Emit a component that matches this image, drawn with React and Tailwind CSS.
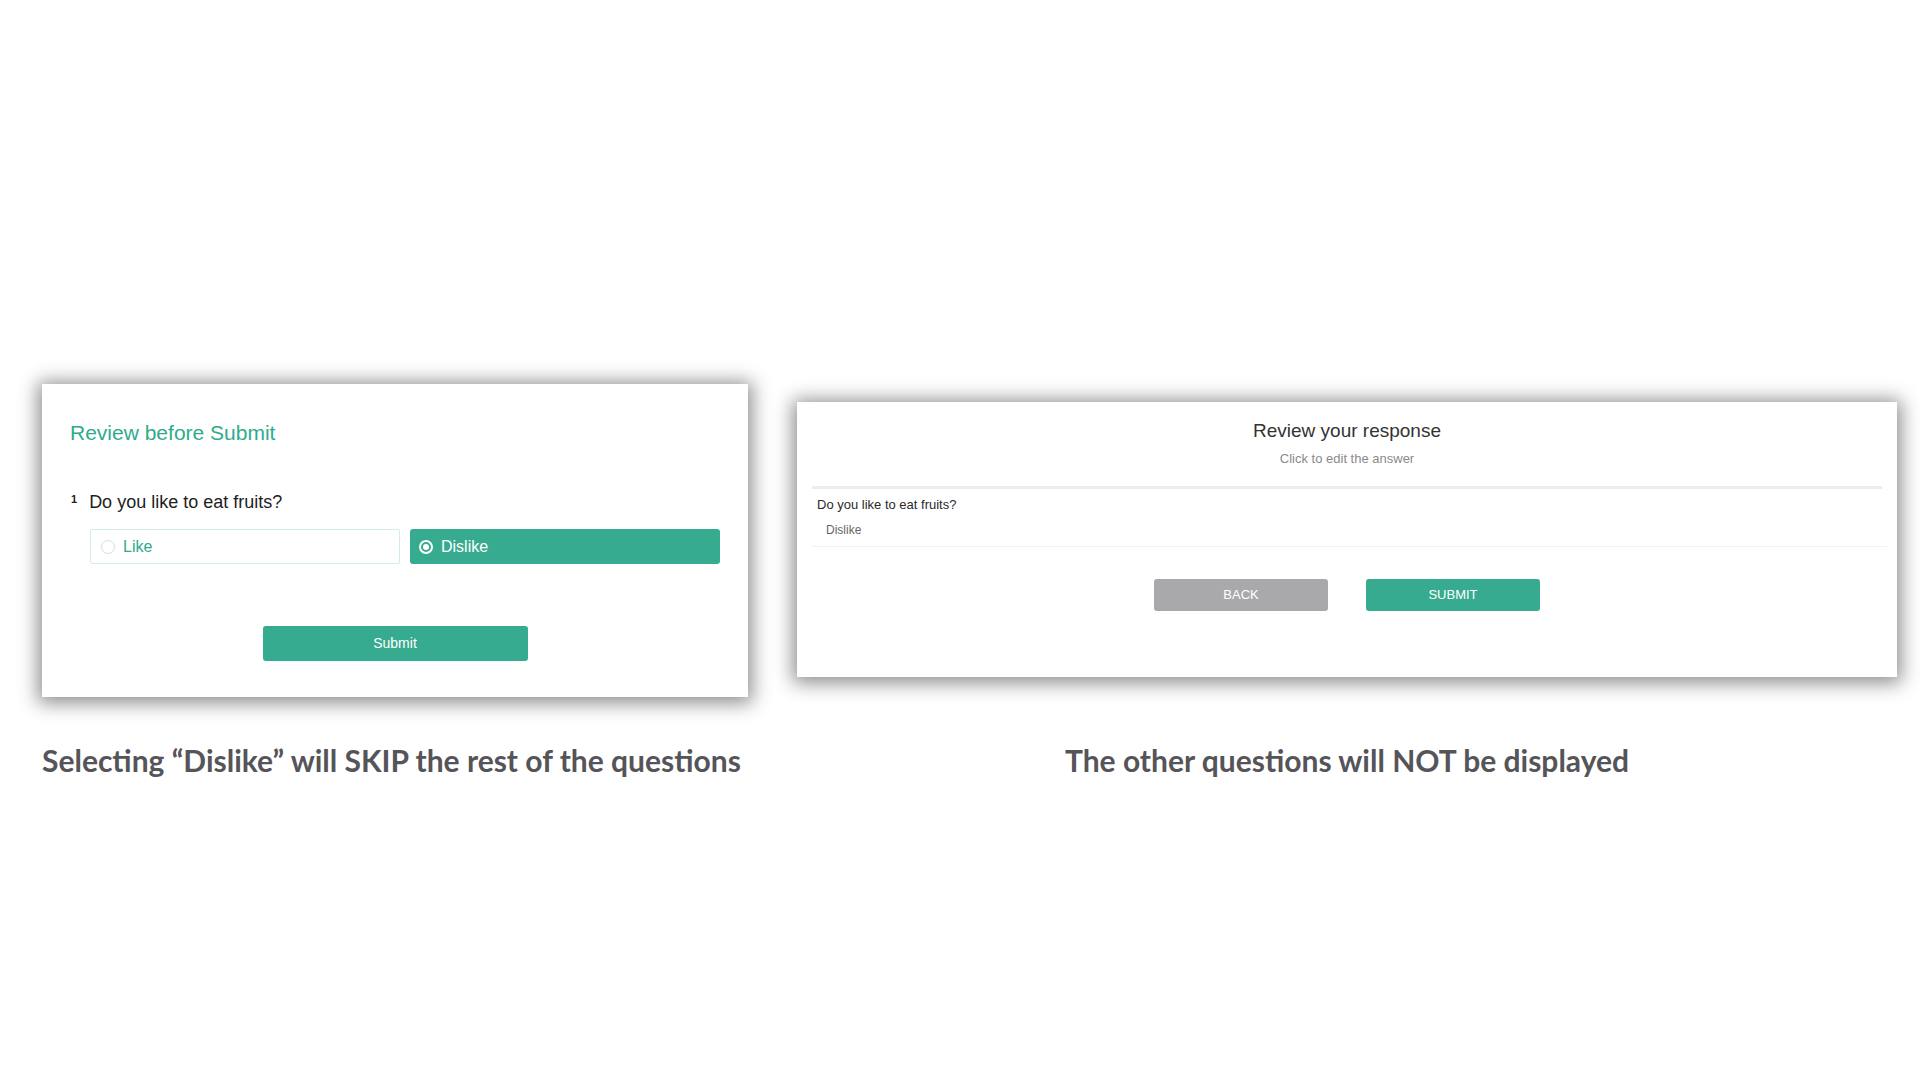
export default function App() {
  return (
    <div className="w-[1920px] h-[1080px] bg-white pl-[42px] pt-[384px] font-['Liberation_Sans',Arial,sans-serif]">
      <div className="grid grid-cols-[706px_1100px] gap-x-[49px] gap-y-[44px] items-start">
        {/* Left — form before submit */}
        <div className="h-[313px] bg-white shadow-[0_2px_18px_4px_rgba(0,0,0,0.45)] pt-[37px] px-[28px]">
          <h2 className="text-[21px] leading-[24px] text-[#2fab8c]">Review before Submit</h2>
          <div className="mt-[45px] flex items-start gap-[12px] pl-[1px]">
            <span className="text-[11px] leading-[14px] font-bold text-[#222] mt-[2px]">1</span>
            <span className="text-[18px] leading-[24px] text-[#1e1e1e]">Do you like to eat fruits?</span>
          </div>
          <div className="mt-[15px] ml-[20px] grid grid-cols-2 gap-[10px]">
            <div className="h-[35px] border border-[#d3ebea] rounded-[2px] flex items-center pl-[10px] gap-[8px]">
              <span className="w-[14px] h-[14px] rounded-full border border-[#dcdce0]" />
              <span className="text-[16px] text-[#2fab8c]">Like</span>
            </div>
            <div className="h-[35px] bg-[#37ab8f] rounded-[3px] flex items-center pl-[9px] gap-[8px]">
              <span className="w-[14px] h-[14px] rounded-full border-2 border-white flex items-center justify-center">
                <span className="w-[6px] h-[6px] rounded-full bg-white" />
              </span>
              <span className="text-[16px] text-white">Dislike</span>
            </div>
          </div>
          <div className="mt-[62px] flex justify-center">
            <button className="w-[265px] h-[35px] bg-[#37ab8f] rounded-[3px] text-white text-[14px]">Submit</button>
          </div>
        </div>

        {/* Right — review screen */}
        <div className="mt-[18px] h-[275px] bg-white shadow-[0_2px_18px_4px_rgba(0,0,0,0.45)] pt-[17px]">
          <div className="text-center">
            <h2 className="text-[19px] leading-[24px] text-[#333]">Review your response</h2>
            <p className="mt-[8px] text-[13px] leading-[16px] text-[#8a8a8a]">Click to edit the answer</p>
          </div>
          <div className="mt-[19px] mx-[15px] h-[3px] bg-[#ececec]" />
          <div className="mx-[15px] pt-[8px] pl-[5px]">
            <p className="text-[13px] leading-[16px] text-[#2a2a2a]">Do you like to eat fruits?</p>
            <p className="mt-[9px] pl-[9px] text-[12px] leading-[16px] text-[#666]">Dislike</p>
          </div>
          <div className="mt-[8px] ml-[15px] mr-[10px] h-px bg-[#f1f1f1]" />
          <div className="mt-[32px] flex justify-center gap-[38px]">
            <button className="w-[174px] h-[32px] bg-[#a9a9ab] rounded-[3px] text-white text-[13px]">BACK</button>
            <button className="w-[174px] h-[32px] bg-[#37ab8f] rounded-[3px] text-white text-[13px]">SUBMIT</button>
          </div>
        </div>

        {/* Captions */}
        <p className="font-['Lato',sans-serif] font-bold text-[30px] leading-[38px] text-[#555459] whitespace-nowrap">
          Selecting “Dislike” will SKIP the rest of the questions
        </p>
        <p className="font-['Lato',sans-serif] font-bold text-[30px] leading-[38px] text-[#555459] text-center whitespace-nowrap">
          The other questions will NOT be displayed
        </p>
      </div>
    </div>
  )
}
